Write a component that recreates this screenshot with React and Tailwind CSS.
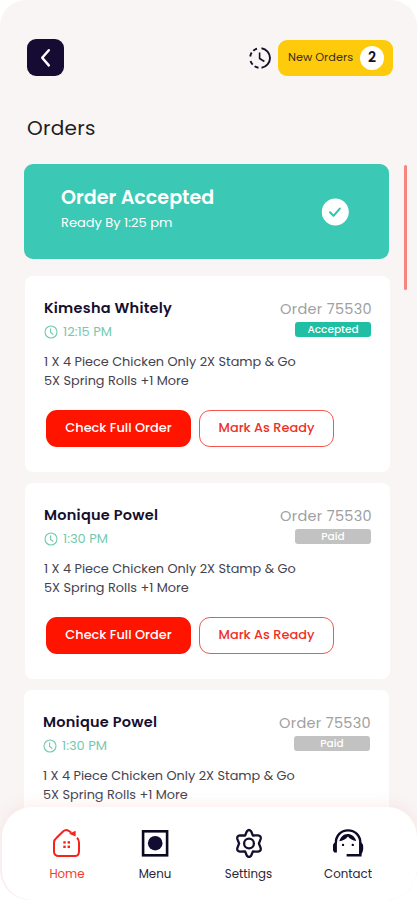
import clsx from "clsx";

// Order list
const orders = [
  { name: "Kimesha Whitely", nameClass: "tracking-[0.24px]", time: "12:15 PM", status: "Accepted", className: "ml-px" },
  { name: "Monique Powel", nameClass: "tracking-[0.25px]", time: "1:30 PM", status: "Paid", className: "ml-px" },
  { name: "Monique Powel", nameClass: "tracking-[0.25px]", time: "1:30 PM", status: "Paid", className: "ml-0" },
];

const BackIcon = () => (
  <svg width="37" height="37" viewBox="0 0 37 37" fill="none">
    <path d="M21.8 11.2 15.2 18.8l6.6 7.6" stroke="#fff" strokeWidth="2.5" strokeLinecap="round" strokeLinejoin="round" />
  </svg>
);

const HistoryIcon = () => (
  <svg width="22" height="22" viewBox="0 0 22 22" fill="none" stroke="#150f2e" strokeWidth="1.9">
    <path d="M12.5 1.2A9.9 9.9 0 0 1 12.5 20.8" />
    <path d="M9.5 20.8A9.9 9.9 0 0 1 1.2 12.5" strokeDasharray="4.2 2.4" />
    <path d="M1.2 9.5A9.9 9.9 0 0 1 9.5 1.2" strokeDasharray="4.2 2.4" />
    <path d="M10.6 5.6v5.9l4.8 3" strokeWidth="1.6" />
  </svg>
);

const ClockIcon = () => (
  <svg width="14" height="14" viewBox="0 0 14 14" fill="none" stroke="#73c9b0" strokeWidth="1.1">
    <circle cx="7" cy="7" r="6" />
    <path d="M6.6 3.8v3.6l2.4 1.8" strokeLinecap="round" />
  </svg>
);

const CheckIcon = () => (
  <svg width="28" height="28" viewBox="0 0 28 28" fill="none">
    <circle cx="14.3" cy="14" r="13.5" fill="#fff" />
    <path d="m9 14.3 3.5 3.6 6.3-7.3" stroke="#2fc4ae" strokeWidth="2" strokeLinecap="round" strokeLinejoin="round" />
  </svg>
);

const HomeIcon = () => (
  <svg width="30" height="30" viewBox="0 0 30 30" fill="none" stroke="#f5231b" strokeWidth="2">
    <path
      d="M25 9.8c1.300 1.300 2 2.800 2 4.600v9c0 2.800-1.700 4.600-4.500 4.600H6.500C3.700 28 2 26.200 2 23.400v-8.600c0-2.200.9-3.700 2.600-5L11.300 3.300C12.900 1.900 14.800 1.700 16.600 2.800l2.800 2"
      strokeLinejoin="round"
    />
    <path d="M17 5.800 23.600 2.800 23.600 8.600z" fill="#f5231b" stroke="none" />
    <g fill="#f5231b" stroke="none">
      <rect x="11.3" y="13.200" width="2.4" height="2.4" />
      <rect x="15.6" y="13.200" width="2.4" height="2.4" />
      <rect x="11.3" y="17.600" width="2.4" height="2.4" />
      <rect x="15.6" y="17.600" width="2.4" height="2.4" />
    </g>
  </svg>
);

const MenuIcon = () => (
  <svg width="30" height="30" viewBox="0 0 30 30" fill="none">
    <rect x="3.1" y="3.3" width="24" height="24" stroke="#0b0820" strokeWidth="2.6" />
    <circle cx="15.2" cy="15.2" r="7.3" fill="#120c33" />
  </svg>
);

const SettingsIcon = () => (
  <svg width="30" height="30" viewBox="0 0 30 30" fill="none" stroke="#150f2e" strokeWidth="2.3" strokeLinejoin="round">
    <path d="M12.9 3.200Q15 .8 17.100 3.200L18.900 7.500 24 7.300Q27.300 7.900 26.700 10.800L24.900 15.500 26.700 20.200Q27.300 23.100 24 23.700L18.900 23.500 17.100 27.800Q15 30.200 12.900 27.800L11.100 23.500 6 23.700Q2.700 23.100 3.300 20.200L5.100 15.500 3.300 10.800Q2.700 7.900 6 7.300L11.100 7.500Z" />
    <circle cx="15" cy="15.500" r="4.900" />
  </svg>
);

const ContactIcon = () => (
  <svg width="32" height="30" viewBox="0 0 32 30" fill="none">
    <path d="M3.8 15.5C3.8 7.3 9 2.4 16 2.4S28.400 7.300 28.400 15.500V27.200H14.600" stroke="#0d0926" strokeWidth="2.4" />
    <path d="M1 17.800Q1 14.600 4.900 14V24.600H3.500Q1 24.600 1 21.500zM27.200 14Q31.200 14.800 31.200 18.200V21Q31.200 24 29 26.500L27.200 26.500z" fill="#0d0926" />
    <path d="M7.300 13.200C8.600 8.800 11.800 6 15.600 6S22.800 8.400 24.200 12.900C20.800 12.300 18 10.800 15.900 8.400 13.600 11.300 10.800 12.900 7.300 13.200Z" fill="#0d0926" />
    <circle cx="11" cy="16.9" r="1.200" fill="#0d0926" />
    <circle cx="20.800" cy="16.900" r="1.200" fill="#0d0926" />
  </svg>
);

// Bottom navigation
const tabs = [
  { label: "Home", icon: <HomeIcon />, className: "w-[88px] text-[#f5392f]" },
  { label: "Menu", icon: <MenuIcon />, className: "w-[88px] text-[#2a2638]" },
  { label: "Settings", icon: <SettingsIcon />, className: "w-[99px] text-[#2a2638]" },
  { label: "Contact", icon: <ContactIcon />, className: "w-[100px] text-[#2a2638]" },
];

const OrderCard = ({ order }) => (
  <div className={clsx("h-[196px] w-[365px] shrink-0 rounded-lg bg-white pl-[19px] pr-[19px] pt-[22px]", order.className)}>
    <div className="flex justify-between">
      <div>
        <h3 className={clsx("text-[14.5px] leading-5 font-semibold text-[#150f2e]", order.nameClass)}>{order.name}</h3>
        <div className="mt-[7px] flex items-center gap-[5px] text-[13px] leading-[14px] text-[#73c9b0]">
          <ClockIcon />
          <span>{order.time}</span>
        </div>
      </div>
      <div className="flex flex-col items-end">
        <p className="-mr-px text-[14.5px] leading-[22px] tracking-[0.3px] text-[#a0a0a0]">Order 75530</p>
        <span
          className={clsx(
            "mt-[2px] h-[15px] w-[76px] rounded-[3px] text-center text-[10.5px] leading-[15px] font-medium text-white",
            order.status === "Accepted" ? "bg-[#1fbfa4]" : "bg-[#c2c2c2]"
          )}
        >
          {order.status}
        </span>
      </div>
    </div>
    <p className="mt-[13px] text-[12.85px] leading-[19.3px] text-[#45424f]">
      1 X 4 Piece Chicken Only 2X Stamp &amp; Go
      <br />
      5X Spring Rolls +1 More
    </p>
    <div className="mt-[19px] ml-[2px] flex gap-2 text-[12.9px] font-medium">
      <button className="h-[37px] w-[145px] rounded-[11px] bg-[#ff1400] text-white">Check Full Order</button>
      <button className="h-[37px] w-[135px] rounded-[11px] border border-[#f4564c] text-[#ee2f28]">Mark As Ready</button>
    </div>
  </div>
);

const App = () => {
  return (
    <div className="relative flex h-[900px] w-[417px] flex-col overflow-hidden rounded-t-[26px] rounded-b-[30px] bg-[#f9f5f4] font-['Poppins','Inter',sans-serif] [font-feature-settings:'cv11']">
      <header className="mt-[39px] flex h-[37px] items-center justify-between pl-[27px] pr-[24px]">
        <button className="rounded-[9px] bg-[#150b33]">
          <BackIcon />
        </button>
        <div className="flex items-center gap-[7px]">
          <HistoryIcon />
          <div className="flex h-9 w-[115px] items-center justify-between rounded-[9px] bg-[#fdcb0b] pl-[10px] pr-[9px]">
            <span className="text-[11.3px] text-[#3a2f20]">New Orders</span>
            <span className="flex size-6 items-center justify-center rounded-full bg-white text-[14px] font-semibold text-[#150f2e]">2</span>
          </div>
        </div>
      </header>

      <h1 className="mt-[38px] pl-[27px] text-[20px] leading-7 tracking-[0.3px] text-[#1f1d22]">Orders</h1>

      <div className="mt-[22px] flex items-start gap-[14px] pl-[24px]">
        <main className="flex flex-col gap-[11px]">
          <section className="mb-[6px] flex h-[95px] w-[365px] items-center justify-between rounded-[9px] bg-[#3bc8b4] pl-[37px] pr-[40px]">
            <div className="-mt-[6px] text-white">
              <h2 className="text-[19.1px] leading-[27px] font-semibold">Order Accepted</h2>
              <p className="text-[13px] leading-[23px]">Ready By 1:25 pm</p>
            </div>
            <CheckIcon />
          </section>
          {orders.map((order, index) => (
            <OrderCard key={index} order={order} />
          ))}
        </main>
        <div className="mt-px h-[125px] w-[3px] rounded-full bg-[#f6857e]" />
      </div>

      <nav className="absolute bottom-0 left-[2px] flex h-[93px] w-[415px] rounded-[30px] bg-white pl-[21px] pt-[21px] shadow-[0_-3px_14px_rgba(244,190,185,0.25)]">
        {tabs.map((tab) => (
          <a key={tab.label} className={clsx("flex flex-col items-center", tab.className)}>
            {tab.icon}
            <span className="mt-[8px] text-[11.8px] leading-4">{tab.label}</span>
          </a>
        ))}
      </nav>
    </div>
  );
};
export default App;
